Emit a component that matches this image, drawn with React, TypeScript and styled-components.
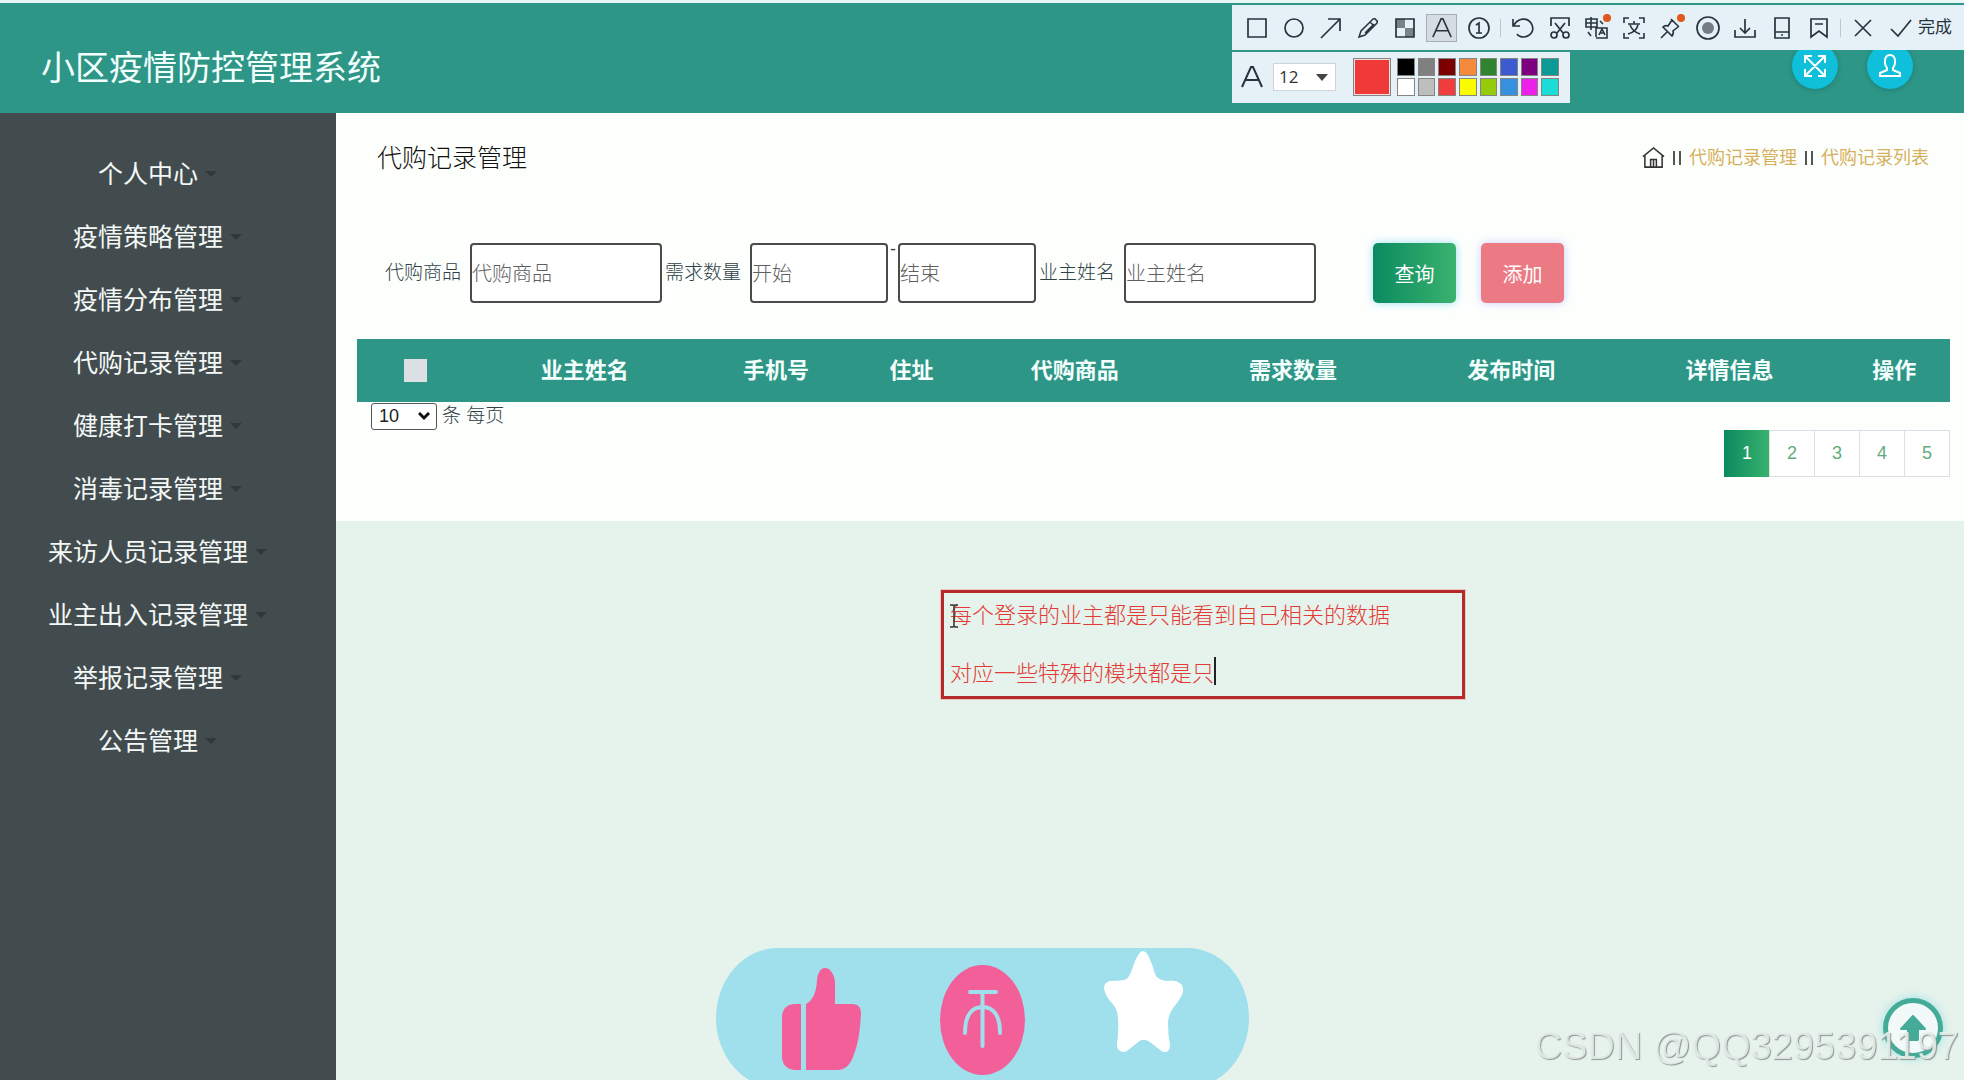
import React from "react";
import styled, { createGlobalStyle } from "styled-components";

const TEAL = "#2d9686";
const INK = "#26343d";

const GlobalStyle = createGlobalStyle`
  *, *::before, *::after { box-sizing: border-box; }
  body {
    margin: 0;
    background: #e6f3ec;
    font-family: "Liberation Sans", "Noto Sans CJK SC", sans-serif;
    overflow: hidden;
  }
  button, input, select, textarea { font-family: inherit; }
`;

const Page = styled.div`
  min-height: 100vh;
  display: flex;
  flex-direction: column;
`;

const Header = styled.header`
  height: 113px;
  flex: none;
  display: flex;
  align-items: flex-start;
  justify-content: space-between;
  padding: 40px 51px 0 41px;
  background: ${TEAL};
  border-top: 3px solid #e9f6f6;
`;

const SystemTitle = styled.h1`
  margin: 0;
  font-size: 34px;
  line-height: 50px;
  font-weight: 400;
  color: #f2fffc;
`;

const HeaderActions = styled.div`
  display: flex;
  gap: 29px;
`;

const RoundButton = styled.button`
  width: 46px;
  height: 46px;
  padding: 0;
  border: 0;
  border-radius: 50%;
  display: grid;
  place-items: center;
  background: #10bfd9;
  color: #fff;
  box-shadow: 0 1px 5px rgba(0, 80, 90, 0.35);
`;

const Body = styled.div`
  flex: 1;
  display: flex;
`;

const Sidebar = styled.nav`
  width: 336px;
  flex: none;
  background: #424c4e;
  padding-top: 29px;
`;

const Menu = styled.ul`
  list-style: none;
  margin: 0;
  padding: 0 21px 0 0;
`;

const MenuLink = styled.a`
  display: flex;
  justify-content: center;
  align-items: center;
  gap: 7px;
  height: 63px;
  font-size: 25px;
  line-height: 36px;
  color: #f4f8f7;
  text-decoration: none;

  &::after {
    content: "";
    border: 6px solid transparent;
    border-top-color: #2f383b;
    border-bottom: 0;
  }
`;

const Main = styled.main`
  flex: 1;
  min-width: 0;
`;

const Panel = styled.section`
  background: #fdfffd;
  padding: 30px 14px 44px 21px;
`;

const TitleRow = styled.div`
  display: flex;
  justify-content: space-between;
  align-items: center;
  height: 30px;
  padding: 0 21px 0 20px;
`;

const PageTitle = styled.h2`
  margin: 0;
  font-size: 25px;
  line-height: 30px;
  font-weight: 300;
  color: #111;
`;

const Breadcrumb = styled.nav`
  display: flex;
  align-items: center;
  gap: 8px;
  font-size: 18px;
  line-height: 24px;
  color: #333;
`;

const Crumb = styled.a<{ $home?: boolean }>`
  display: flex;
  color: ${(p) => (p.$home ? "#333" : "#d5b15c")};
  text-decoration: none;
`;

const Bars = styled.i`
  width: 8px;
  height: 14px;
  border: solid #555;
  border-width: 0 2px;
`;

const SearchForm = styled.form`
  display: flex;
  align-items: center;
  margin: 70px 0 36px;
  padding-left: 25px;
`;

const Label = styled.label`
  padding: 0 9px 0 3px;
  font-size: 19px;
  line-height: 28px;
  font-weight: 300;
  color: #2e4147;
  white-space: nowrap;
`;

const Field = styled.input<{ $narrow?: boolean }>`
  width: ${(p) => (p.$narrow ? 138 : 192)}px;
  height: 60px;
  padding: 3px 0 0;
  border: 2px solid #4b4b4b;
  border-radius: 4px;
  background: #fff;
  font-size: 20px;
  font-weight: 300;
  &::placeholder { color: #5e5e5e; }
`;

const Dash = styled.span`
  align-self: flex-start;
  width: 10px;
  text-align: center;
  font-size: 18px;
  line-height: 12px;
  color: #444;
`;

const FormButtons = styled.div`
  display: flex;
  gap: 25px;
  margin-left: 57px;
`;

const ActionButton = styled.button<{ $danger?: boolean }>`
  width: 83px;
  height: 60px;
  padding: 0;
  border: 0;
  border-radius: 5px;
  font-size: 20px;
  color: #fff;
  background: ${(p) => (p.$danger ? "#eb7a84" : "linear-gradient(90deg, #0b8a60, #39b36e)")};
  box-shadow: 0 0 9px ${(p) => (p.$danger ? "rgba(150, 160, 255, 0.5)" : "rgba(90, 200, 230, 0.6)")};
`;

const Table = styled.table`
  width: 100%;
  table-layout: fixed;
  border-collapse: collapse;
  background: ${TEAL};

  th {
    height: 63px;
    padding: 0;
    text-align: center;
    font-size: 22px;
    line-height: 32px;
    font-weight: 700;
    color: #f4fffd;
  }
`;

const Check = styled.input`
  appearance: none;
  display: block;
  width: 23px;
  height: 23px;
  margin: 0 auto;
  background: #dcdfe4;
`;

const PageSize = styled.label`
  display: flex;
  align-items: center;
  gap: 5px;
  height: 28px;
  padding-left: 14px;
  font-size: 19px;
  line-height: 28px;
  font-weight: 300;
  color: #2e4147;
`;

const SizeBox = styled.span`
  position: relative;
  display: flex;
  svg { position: absolute; right: 6px; top: 9px; pointer-events: none; }
`;

const SizeSelect = styled.select`
  appearance: none;
  width: 66px;
  height: 27px;
  padding: 0 0 0 7px;
  border: 1px solid #555;
  border-radius: 3px;
  background: #fff;
  font-size: 18px;
  color: #222;
`;

const Pagination = styled.nav`
  display: flex;
  justify-content: flex-end;
`;

const PageButton = styled.button<{ $active?: boolean }>`
  width: 46px;
  height: 47px;
  margin-left: -1px;
  padding: 0;
  font-size: 18px;
  border: ${(p) => (p.$active ? "0" : "1px solid #dcdfe3")};
  color: ${(p) => (p.$active ? "#fff" : "#63ab7c")};
  background: ${(p) => (p.$active ? "linear-gradient(90deg, #0b8a60, #39b36e)" : "#fff")};
`;

/* ---- capture tool floating above the page ---- */

const Capture = styled.aside`
  position: absolute;
  top: 5px;
  right: 0;
  display: flex;
  flex-direction: column;
  align-items: flex-start;
  gap: 2px;
  color: ${INK};
`;

const ToolRow = styled.div`
  display: flex;
  align-items: center;
  height: 45px;
  width: 732px;
  padding-left: 6px;
  background: #e5f0f7;
`;

const ToolButton = styled.button<{ $on?: boolean }>`
  width: 31px;
  height: 28px;
  margin: 0 3px;
  padding: 0;
  border: 1px solid ${(p) => (p.$on ? "#a9afb4" : "transparent")};
  background: ${(p) => (p.$on ? "#d6dde2" : "transparent")};
  color: inherit;
  display: grid;
  place-items: center;
  flex: none;
`;

const Divider = styled.i`
  width: 1px;
  height: 18px;
  margin: 0 3px;
  background: #bcc8d0;
`;

const DoneButton = styled.button`
  display: flex;
  align-items: center;
  gap: 5px;
  padding: 0 0 0 8px;
  border: 0;
  background: none;
  color: inherit;
  font-size: 17px;
  line-height: 24px;
  white-space: nowrap;
`;

const StyleRow = styled.div`
  display: flex;
  align-items: center;
  height: 51px;
  padding: 0 11px 2px 8px;
  background: #e5f0f7;
`;

const FontSize = styled.span`
  position: relative;
  margin: 0 17px 0 9px;
  display: flex;
  svg { position: absolute; right: 8px; top: 11px; pointer-events: none; }
`;

const FontSelect = styled.select`
  appearance: none;
  width: 63px;
  height: 28px;
  padding: 0 0 0 5px;
  border: 1px solid #cdd5da;
  background: #fff;
  font-family: "Open Sans", sans-serif;
  font-size: 17px;
  color: #333;
`;

const Swatch = styled.button<{ $color: string; $large?: boolean }>`
  width: ${(p) => (p.$large ? "38px" : "auto")};
  height: ${(p) => (p.$large ? 38 : 18)}px;
  padding: 0;
  border: 1px solid #858585;
  background: ${(p) => p.$color};
  box-shadow: ${(p) => (p.$large ? "inset 0 0 0 1px #f3dfe0" : "none")};
`;

const Swatches = styled.div`
  display: grid;
  grid-template-columns: repeat(8, 1fr);
  gap: 2px 3px;
  width: 162px;
  margin-left: 6px;
`;

const Note = styled.div`
  position: absolute;
  left: 941px;
  top: 590px;
  width: 524px;
  height: 109px;
  border: 3px solid #b52a2a;
  outline: 1px solid rgba(240, 170, 160, 0.6);
`;

const NoteText = styled.textarea`
  display: block;
  width: 100%;
  height: 100%;
  padding: 8px 6px;
  border: 0;
  resize: none;
  overflow: hidden;
  background: transparent;
  color: #e23b36;
  font-size: 22px;
  line-height: 29px;
  font-weight: 300;
`;

const Caret = styled.i`
  position: absolute;
  left: 270px;
  top: 64px;
  width: 2px;
  height: 28px;
  background: #222;
`;

const Pointer = styled.svg`
  position: absolute;
  left: 5px;
  top: 11px;
`;

const Reactions = styled.div`
  position: fixed;
  left: 716px;
  bottom: -8px;
  width: 533px;
  height: 140px;
  border-radius: 62px / 70px;
  background: #a0dfec;
  display: flex;
  align-items: flex-start;
  padding: 3px 66px 0;
  justify-content: space-between;
`;

const Reaction = styled.button<{ $drop?: number }>`
  margin: ${(p) => p.$drop ?? 0}px 0 0;
  padding: 0;
  border: 0;
  background: none;
  display: flex;
`;

const ToTop = styled.a`
  position: fixed;
  right: 21px;
  bottom: 22px;
  width: 60px;
  height: 60px;
  border: 5px solid #45ab99;
  border-radius: 50%;
  display: grid;
  place-items: center;
  background: #f1faf8;
  box-shadow: 0 0 10px rgba(120, 215, 225, 0.7);
`;

const Watermark = styled.span`
  position: fixed;
  right: 5px;
  bottom: 12px;
  font-size: 38px;
  line-height: 44px;
  color: rgba(234, 243, 238, 0.85);
  text-shadow: 1px 1px 1px #8f9593;
  pointer-events: none;
  white-space: nowrap;
`;

const Icon = styled.svg`
  display: block;
  overflow: visible;
  fill: none;
  stroke: currentColor;
`;

const Stroke = ({ children, size = 24, width = 2 }: { children: React.ReactNode; size?: number; width?: number }) => (
  <Icon width={size} height={size} viewBox="0 0 24 24" strokeWidth={width} aria-hidden>
    {children}
  </Icon>
);

const LetterA = () => <path d="M2 22 11 2h2l9 20M6 15h12" />;

const firstTools: [string, React.ReactNode][] = [
  ["矩形", <path d="M3 3h18v18H3z" />],
  ["椭圆", <circle cx="12" cy="12" r="9" />],
  ["箭头", <path d="M2 22 21 3M9 3h12v12" />],
  ["画笔", <path d="m3 21 2-6L17 3q2-1 3 1 2 1 1 3L9 19zM14 6l4 4M18 8 9 17" strokeWidth="1.5" />],
  ["马赛克", <><path d="M3 3h9v9H3zM12 12h9v9h-9z" fill="#7a8288" stroke="none" /><path d="M3 3h18v18H3z" /></>],
  ["文字", <LetterA />],
  ["序号", <><circle cx="12" cy="12" r="10" /><path d="M9 9l3-2v10M9 17h6" /></>],
];

const dot = <circle cx="22" cy="2" r="4" fill="#e2571e" stroke="none" />;

const secondTools: [string, React.ReactNode][] = [
  ["撤销", <path d="M2 3v7h7M3 9C7 2 16 1 20 7s1 13-7 14q-5 0-7-3" />],
  ["裁剪", <><path d="M3 10V2h18v8M7 7l8 10M17 7 9 17" /><circle cx="6" cy="19" r="3" /><circle cx="18" cy="19" r="3" /></>],
  ["翻译", <><path d="M1 3h11v8H1zM1 7h11M6 1v13M3 16l3 4M15 5l3 3M11 21v-9h11v10H11M14 19l3-6 3 6M15 17h4" strokeWidth="1.6" />{dot}</>],
  ["识别文字", <path d="M2 7V2h5M17 2h5v5M22 17v5h-5M7 22H2v-5M12 5v3M6 8h12M16 9q-2 7-10 9M8 9q3 7 10 9" strokeWidth="1.6" />],
  ["钉住", <><path d="m12 3 8 8M13 4l-4 6q-3-1-5 1l9 9q2-3 1-5l5-4M8 16l-6 6M4 11l9 9" strokeWidth="1.6" />{dot}</>],
  ["录制", <><circle cx="12" cy="12" r="11" /><circle cx="12" cy="12" r="6" fill="#747d83" stroke="none" /></>],
  ["下载", <path d="M12 3v14M7 12l5 5 5-5M2 14v7h20v-7" />],
  ["手机", <path d="M5 2h14v20H5zM5 16h14M11 19h2" />],
  ["收藏", <path d="M4 3h16v18l-8-6-8 6zM8 8h8" />],
];

const colors = [
  "#000", "#808080", "#7d0000", "#f58a3c", "#2f842f", "#3c5bd0", "#7d0080", "#0b9a96",
  "#fff", "#bdbfbc", "#ef3d3d", "#fbfb00", "#95cb08", "#378fe0", "#ec20e8", "#1bdcd6",
];

const menu = [
  "个人中心", "疫情策略管理", "疫情分布管理", "代购记录管理", "健康打卡管理",
  "消毒记录管理", "来访人员记录管理", "业主出入记录管理", "举报记录管理", "公告管理",
];

const columns: [string, string][] = [
  ["业主姓名", "13.8%"], ["手机号", "10.2%"], ["住址", "6.8%"], ["代购商品", "13.7%"],
  ["需求数量", "13.7%"], ["发布时间", "13.7%"], ["详情信息", "13.7%"], ["操作", "7%"],
];

export default function App() {
  return (
    <>
      <GlobalStyle />
      <Page>
        <Header>
          <SystemTitle>小区疫情防控管理系统</SystemTitle>
          <HeaderActions>
            <RoundButton aria-label="全屏">
              <Stroke><path d="m3 3 18 18M21 3 3 21M2 9V2h7M15 2h7v7M22 15v7h-7M9 22H2v-7" /></Stroke>
            </RoundButton>
            <RoundButton aria-label="用户">
              <Stroke><path d="M9 14C5 8 7 1 12 1s7 7 3 13v2l7 3v3H2v-3l7-3z" /></Stroke>
            </RoundButton>
          </HeaderActions>
        </Header>
        <Body>
          <Sidebar>
            <Menu>
              {menu.map((m) => (
                <li key={m}><MenuLink href="#">{m}</MenuLink></li>
              ))}
            </Menu>
          </Sidebar>
          <Main>
            <Panel>
              <TitleRow>
                <PageTitle>代购记录管理</PageTitle>
                <Breadcrumb>
                  <Crumb href="#" $home aria-label="首页">
                    <Stroke size={23} width={1.6}><path d="M1 10 12 1l11 9M3 9v12h18V9M9 21v-8h6v8M12 13v8" /></Stroke>
                  </Crumb>
                  <Bars />
                  <Crumb href="#">代购记录管理</Crumb>
                  <Bars />
                  <Crumb href="#">代购记录列表</Crumb>
                </Breadcrumb>
              </TitleRow>
              <SearchForm onSubmit={(e) => e.preventDefault()}>
                <Label htmlFor="goods">代购商品</Label>
                <Field id="goods" placeholder="代购商品" />
                <Label htmlFor="from">需求数量</Label>
                <Field id="from" $narrow placeholder="开始" />
                <Dash>-</Dash>
                <Field $narrow placeholder="结束" aria-label="需求数量结束" />
                <Label htmlFor="owner">业主姓名</Label>
                <Field id="owner" placeholder="业主姓名" />
                <FormButtons>
                  <ActionButton type="submit">查询</ActionButton>
                  <ActionButton type="button" $danger>添加</ActionButton>
                </FormButtons>
              </SearchForm>
              <Table>
                <colgroup>
                  <col />
                  {columns.map(([name, width]) => <col key={name} style={{ width }} />)}
                </colgroup>
                <thead>
                  <tr>
                    <th><Check type="checkbox" aria-label="全选" /></th>
                    {columns.map(([name]) => <th key={name} scope="col">{name}</th>)}
                  </tr>
                </thead>
              </Table>
              <PageSize>
                <SizeBox>
                  <SizeSelect defaultValue="10">
                    <option>10</option>
                    <option>25</option>
                    <option>50</option>
                  </SizeSelect>
                  <svg width="13" height="9" viewBox="0 0 13 9" fill="none" stroke="#111" strokeWidth="3"><path d="m1 1 5 5 5-5" /></svg>
                </SizeBox>
                条 每页
              </PageSize>
              <Pagination aria-label="分页">
                {[1, 2, 3, 4, 5].map((n) => <PageButton key={n} $active={n === 1}>{n}</PageButton>)}
              </Pagination>
            </Panel>
          </Main>
        </Body>
      </Page>

      <Note>
        <NoteText aria-label="批注" spellCheck={false} defaultValue={"每个登录的业主都是只能看到自己相关的数据\n\n对应一些特殊的模块都是只"} />
        <Caret />
        <Pointer width="10" height="24" viewBox="0 0 10 24" fill="none" stroke="#333" strokeWidth="1.5">
          <path d="M1 1h3l1 1 1-1h3M5 2v20M1 23h3l1-1 1 1h3" />
        </Pointer>
      </Note>

      <Capture>
        <ToolRow>
          {firstTools.map(([name, icon]) => (
            <ToolButton key={name} aria-label={name} $on={name === "文字"}>
              <Stroke width={1.7} size={name === "文字" ? 22 : 24}>{icon}</Stroke>
            </ToolButton>
          ))}
          <Divider />
          {secondTools.map(([name, icon]) => (
            <ToolButton key={name} aria-label={name}><Stroke width={1.7}>{icon}</Stroke></ToolButton>
          ))}
          <Divider />
          <ToolButton aria-label="关闭"><Stroke width={1.7}><path d="m4 4 16 16M20 4 4 20" /></Stroke></ToolButton>
          <DoneButton>
            <Stroke width={1.7}><path d="m2 13 7 7L22 4" /></Stroke>
            完成
          </DoneButton>
        </ToolRow>
        <StyleRow>
          <Stroke width={2}><LetterA /></Stroke>
          <FontSize>
            <FontSelect aria-label="字号" defaultValue="12">
              <option>12</option>
              <option>14</option>
            </FontSelect>
            <svg width="12" height="7" viewBox="0 0 12 7" fill="#444"><path d="M0 0h12L6 7z" /></svg>
          </FontSize>
          <Swatch $color="#ef3a38" $large aria-label="当前颜色" />
          <Swatches>
            {colors.map((c) => <Swatch key={c} $color={c} aria-label={c} />)}
          </Swatches>
        </StyleRow>
      </Capture>

      <Reactions>
        <Reaction $drop={17} aria-label="点赞">
          <svg width="79" height="102" viewBox="0 0 79 102" fill="#f35f98">
            <path d="M19 36v66h-7Q0 100 0 88V50Q0 37 12 36zM24 36q10-5 11-24C36 4 39 0 43 0c6 0 10 8 10 15v21h17q9 0 9 9-1 28-8 44-5 13-16 13H24z" />
          </svg>
        </Reaction>
        <Reaction $drop={14} aria-label="投币">
          <svg width="85" height="110" viewBox="0 0 85 110" fill="none" stroke="#a0dfec" strokeWidth="4" strokeLinecap="round">
            <ellipse cx="42.500" cy="55" rx="42.500" ry="55" fill="#f35f98" stroke="none" />
            <path d="M30 27h26M42.500 27v54M25 68C25 50 32 42 42.500 42S60 50 60 68" />
          </svg>
        </Reaction>
        <Reaction aria-label="收藏">
          <svg width="79" height="101" viewBox="0 0 79 101" fill="#fff">
            <path d="M33 6q6-12 12 0 4 9 6 17 3 7 13 7c10-1 18 3 14 14-4 9-14 15-14 28q0 12 2 22c0 8-6 9-11 4-10-8-15-13-22-6-6 4-12 13-18 7-4-3-1-9-1-17 1-18 0-24-8-32Q0 42 0 36c2-9 12-5 19-7 8 0 9-14 14-23z" />
          </svg>
        </Reaction>
      </Reactions>

      <ToTop href="#" aria-label="返回顶部">
        <svg width="28" height="28" viewBox="0 0 28 28" fill="#45ab99" stroke="#45ab99" strokeWidth="2" strokeLinejoin="round">
          <path d="M14 2 26 15h-7v11H9V15H2z" />
        </svg>
      </ToTop>
      <Watermark>CSDN @QQ3295391197</Watermark>
    </>
  );
}
